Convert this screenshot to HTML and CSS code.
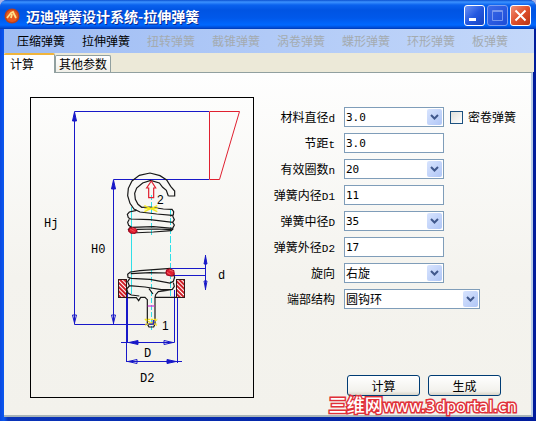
FILE: index.html
```html
<!DOCTYPE html>
<html lang="zh-CN">
<head>
<meta charset="utf-8">
<title>迈迪弹簧设计系统-拉伸弹簧</title>
<link rel="stylesheet" href="styles.css">
</head>
<body>
<div class="window">
  <header class="titlebar">
    <svg class="logo" viewBox="0 0 16 16" aria-hidden="true">
      <circle cx="8" cy="8" r="7.5" fill="#b8401c"/>
      <circle cx="8" cy="8" r="6" fill="#e8581c"/>
      <path d="M3 10 7 5 9 4 12 10M7 10 8 6" fill="none" stroke="#ffe08a" stroke-width="1.8"/>
    </svg>
    <h1 class="title">迈迪弹簧设计系统-拉伸弹簧</h1>
    <div class="controls">
      <button class="control" type="button" aria-label="最小化"><svg viewBox="0 0 19 19"><path d="M4 13.500h7" stroke="#fff" stroke-width="3"/></svg></button>
      <button class="control control-off" type="button" aria-label="最大化" disabled><svg viewBox="0 0 19 19"><path d="M4.500 4.500h10v10h-10zM4.500 5.500h10" fill="none" stroke="#7898ee"/></svg></button>
      <button class="control control-close" type="button" aria-label="关闭"><svg viewBox="0 0 19 19"><path d="m4.500 4.500 10 10m0-10-10 10" stroke="#fff" stroke-width="2"/></svg></button>
    </div>
  </header>
  <nav class="menu">
    <button type="button">压缩弹簧</button>
    <button type="button">拉伸弹簧</button>
    <button type="button" disabled>扭转弹簧</button>
    <button type="button" disabled>截锥弹簧</button>
    <button type="button" disabled>涡卷弹簧</button>
    <button type="button" disabled>蝶形弹簧</button>
    <button type="button" disabled>环形弹簧</button>
    <button type="button" disabled>板弹簧</button>
  </nav>
  <div class="tabs" role="tablist">
    <button class="tab tab-active" type="button" role="tab" aria-selected="true">计算</button>
    <button class="tab" type="button" role="tab" aria-selected="false">其他参数</button>
  </div>
  <main class="panel">
    <svg class="drawing" viewBox="31 98 222 299" role="img" aria-label="拉伸弹簧">
      <defs>
        <pattern id="hatch" width="3" height="3" patternUnits="userSpaceOnUse" patternTransform="rotate(-45)">
          <rect width="3" height="3" fill="#fff"/><path d="M1 0v3" stroke="#d02028" stroke-width="2"/>
        </pattern>
      </defs>
      <g stroke="#30dfe8" fill="none" shape-rendering="crispEdges">
        <path d="M131.500 207v87"/>
        <path d="M151.500 195v42M151.500 270v60" stroke-dasharray="5 2"/>
        <path d="M170.500 209v87" stroke-dasharray="7 2"/>
      </g>
      <g fill="none" stroke="#1818c8">
        <path d="M209 111.500H74.500V324.500H155M209 179.500H113.500V324.500"/>
        <path d="M171 268.500h35M171 275.500h35M205.500 255v35"/>
        <path d="M121 342.500H174.500V290M126.500 362V290M126 361.500H182M177.500 280V363"/>
        <path d="M127 291v52" stroke-width="2"/>
        <path d="M74.500 112l-2 9h4zM113.500 180l-2 9h4zM205.500 256l-1.500 8h3z" fill="#1818c8"/>
        <path d="M74.500 323l-2-8h4zM113.500 323l-2-8h4zM205.500 289l-1.500-8h3z"/>
        <path d="M173 342.500l-9-2v4zM128 361.500l9-2v4z"/>
        <path d="M129 342.500l9-2v4zM176 361.500l-9-2v4z" fill="#1818c8"/>
      </g>
      <path d="M209.500 111.500h30l-20 68h-10z" fill="none" stroke="#e02030"/>
      <rect x="118.500" y="279.500" width="8" height="18" fill="url(#hatch)" stroke="#301818"/>
      <rect x="176.500" y="279.500" width="8" height="18" fill="url(#hatch)" stroke="#301818"/>
      <g transform="translate(110 165) scale(.333333)" fill="none" stroke="#181818" stroke-width="3.6">
        <path d="M175 93h19v-15L182 64 170 45 150 32 120 24 88 31 66 48 55 70 53 92 60 115 72 132 90 141 140 147 188 151"/>
        <path d="M175 93 169 76 158 67 148 54 122 46 98 54 80 69 74 85 76 103 84 118 95 127 120 126 160 132 186 133 191 140 190 150 180 153"/>
        <path d="M80 136 58 141 52 148 55 158 62 162 120 164 188 172 193 164 188 153M58 163 53 172 56 181 65 187 130 185 188 190 193 180 188 172M62 186 55 194 64 204 130 201 184 197 190 191M80 193 140 192 185 194"/>
        <path d="M116 98V69H110L124 48 137 69H131V98z" stroke="#e02030"/>
        <path d="m103 122 39 18m0-18-39 18m0-9h40" stroke="#f4ea20" stroke-width="4"/>
        <path d="M58 190 67 188 78 192 81 199 74 205 62 204 56 198z" fill="#e02030" stroke="#a80820"/>
        <path d="m60 192 14 8m-8-11 11 4" stroke="#ff6868" stroke-width="2"/>
      </g>
      <g transform="translate(110 255) scale(.333333)" fill="none" stroke="#181818" stroke-width="3.6">
        <path d="M182 40 90 47 61 51 53 58 54 67 64 70 120 73 180 84 190 79 194 66 188 57M62 56 120 53 174 54M59 71 53 80 58 92 105 96 154 104 187 103 193 94 190 83M58 93 50 102 54 114 64 120 88 123M187 104 145 110 137 119 135 128V207l-4 9h-14l-5-9V134L105 127H92L86 137 79 128H52M135 127h66M117 101 129 117"/>
        <path d="m170 45 9-3 12 5 2 11-7 5-15-3-3-7z" fill="#e02030" stroke="#a80820"/>
        <path d="m171 52 10 6m-3-13 12 4" stroke="#ff8888" stroke-width="2"/>
        <path d="M113 153h21" stroke="#d030d0"/>
        <path d="m106 195 35 16m0-16-35 16m-2-18h38m-36 14h36" stroke="#f4e020" stroke-dasharray="7 2"/>
        <path d="M115 207h15v-12" stroke="#1818c8"/>
      </g>
      <g class="marks">
        <text x="44" y="227">Hj</text>
        <text x="91" y="253">H0</text>
        <text x="218" y="279">d</text>
        <text x="144" y="357">D</text>
        <text x="140" y="382">D2</text>
        <text class="mark-number" x="157" y="204">2</text>
        <text class="mark-number" x="162" y="330">1</text>
      </g>
    </svg>
    <form class="form">
      <div class="fields">
        <label for="wire">材料直径<span class="latin">d</span></label>
        <div class="row">
          <span class="combo"><select id="wire"><option>3.0</option></select><svg viewBox="0 0 15 16"><path d="m4 6 3.500 3.500L11 6"/></svg></span>
          <label class="check"><input type="checkbox">密卷弹簧</label>
        </div>
        <label for="pitch">节距<span class="latin">t</span></label>
        <input class="text" id="pitch" value="3.0">
        <label for="turns">有效圈数<span class="latin">n</span></label>
        <span class="combo"><select id="turns"><option>20</option></select><svg viewBox="0 0 15 16"><path d="m4 6 3.500 3.500L11 6"/></svg></span>
        <label for="inner">弹簧内径<span class="latin">D1</span></label>
        <input class="text" id="inner" value="11">
        <label for="middle">弹簧中径<span class="latin">D</span></label>
        <span class="combo"><select id="middle"><option>35</option></select><svg viewBox="0 0 15 16"><path d="m4 6 3.500 3.500L11 6"/></svg></span>
        <label for="outer">弹簧外径<span class="latin">D2</span></label>
        <input class="text" id="outer" value="17">
        <label for="turn">旋向</label>
        <span class="combo"><select class="han" id="turn"><option>右旋</option></select><svg viewBox="0 0 15 16"><path d="m4 6 3.500 3.500L11 6"/></svg></span>
        <label for="ends">端部结构</label>
        <span class="combo combo-wide"><select class="han" id="ends"><option>圆钩环</option></select><svg viewBox="0 0 15 16"><path d="m4 6 3.500 3.500L11 6"/></svg></span>
      </div>
      <div class="actions">
        <button type="button">计算</button>
        <button type="button">生成</button>
      </div>
    </form>
  </main>
  <div class="watermark"><span class="watermark-han">三维网</span>www.3dportal.cn</div>
</div>
</body>
</html>
```
FILE: styles.css
```css
* { box-sizing: border-box; }

body {
  margin: 0;
  background: #a9b4e8;
  color: #000;
  font: 12px/16px "Noto Sans CJK SC", sans-serif;
}

button, input, select { font: inherit; color: inherit; margin: 0; }

.window {
  position: relative;
  display: flex;
  flex-direction: column;
  min-height: 100vh;
  padding: 0 4px 4px;
  background: linear-gradient(90deg, #0a48e0 0, #0a58f0 4px, #0a34b8 8px, #001c9c 100%);
  border-radius: 7px 7px 0 0;
}

.titlebar {
  display: flex;
  align-items: center;
  height: 29px;
  margin: 0 -4px;
  padding: 2px 5px 0 4px;
  border-radius: 7px 7px 0 0;
  background: linear-gradient(#0a50d0 0, #3c92ff 2px, #0a62ee 5px, #0054e3 10px, #0058ea 18px, #0068ff 25px, #0048d0 28px, #0038b0 29px);
}

.logo { width: 16px; height: 16px; }

.title {
  flex: 1;
  margin: 0 0 0 6px;
  color: #fff;
  font-size: 14px;
  font-weight: 700;
  line-height: 20px;
  text-shadow: 1px 1px 0 #0a2a90;
  white-space: nowrap;
}

.controls { display: flex; gap: 2px; }

.control {
  width: 21px;
  height: 21px;
  padding: 0;
  border: 1px solid #fff;
  border-radius: 3px;
  background: linear-gradient(135deg, #6c92f4, #2458e0 50%, #1844c0);
}

.control svg { display: block; width: 19px; height: 19px; }
.control-off { border-color: #7c9ef0; background: linear-gradient(135deg, #3c6ae8, #1c4cd8); }
.control-close { background: linear-gradient(135deg, #f09078, #e0502c 50%, #b83414); }

.menu {
  display: flex;
  gap: 17px;
  height: 24px;
  margin-right: -2px;
  padding-left: 13px;
  background: linear-gradient(90deg, #9ebcf4, #c4d8fa);
}

.menu button {
  padding: 0;
  border: 0;
  background: none;
  white-space: nowrap;
}

.menu button:disabled { color: #a4abb0; }

.tabs {
  display: flex;
  align-items: flex-end;
  height: 19px;
  margin-right: -2px;
  background: #ece9d8;
}

.tab {
  height: 17px;
  padding: 0 3px;
  border: 1px solid #91a0a0;
  border-bottom: 0;
  border-radius: 2px 2px 0 0;
  background: linear-gradient(#fff, #f0efe8);
  white-space: nowrap;
}

.tab-active {
  width: 51px;
  height: 20px;
  margin-bottom: -1px;
  padding: 0 20px 0 6px;
  border-top: 2px solid #f0b43c;
  border-left: 0;
  background: #fefefe;
  z-index: 1;
}

.panel {
  display: flex;
  flex: 1;
  align-items: flex-start;
  gap: 19px;
  margin-right: -1px;
  padding: 24px 12px 17px 26px;
  border-top: 1px solid #91a0a0;
  border-right: 2px solid #b8cce8;
  border-bottom: 2px solid #a8b4b8;
  background: linear-gradient(#fefefe, #f4f3ee 60%, #f3f2ec);
}

.drawing {
  flex: none;
  width: 224px;
  height: 301px;
  border: 1px solid #000;
}

.marks { font: 12px "Liberation Mono", monospace; }
.mark-number { font-family: "Liberation Sans", sans-serif; }

.form { flex: 1; padding-top: 10px; }

.fields {
  display: grid;
  grid-template-columns: 62px 1fr;
  grid-auto-rows: 20px;
  gap: 6px 9px;
  align-items: center;
}

.fields > label { text-align: right; white-space: nowrap; }
.latin { font: 11px "Liberation Mono", monospace; }

.row { display: flex; align-items: center; gap: 6px; }

.text, .combo select {
  width: 100px;
  height: 20px;
  padding: 0 1px;
  border: 1px solid #7f9db9;
  border-radius: 0;
  outline: 0;
  background: #fff;
  font: 11px "DejaVu Sans Mono", monospace;
}

.combo { position: relative; width: 100px; height: 20px; }
.combo select { display: block; width: 100%; appearance: none; }
.combo .han { font: 12px/16px "Noto Sans CJK SC", sans-serif; }
.combo-wide { width: 136px; }

.combo svg {
  position: absolute;
  top: 2px;
  right: 2px;
  width: 15px;
  height: 16px;
  border-radius: 2px;
  background: linear-gradient(135deg, #d8e4fe, #b0c6f6);
  pointer-events: none;
}

.combo path { fill: none; stroke: #40588c; stroke-width: 2; }

.check { display: flex; align-items: center; gap: 5px; white-space: nowrap; }

.check input {
  appearance: none;
  width: 13px;
  height: 13px;
  border: 1px solid #1c5180;
  background: linear-gradient(135deg, #e0e0da, #fff);
}

.actions {
  display: flex;
  gap: 8px;
  margin: 66px 0 0 74px;
}

.actions button {
  width: 73px;
  height: 21px;
  padding: 0;
  border: 1px solid #003c74;
  border-radius: 3px;
  background: linear-gradient(#fff, #f2f1ec 80%, #d8d4c8);
}

.watermark {
  position: absolute;
  right: 19px;
  bottom: 5px;
  color: #fff;
  font: 400 16px/18px "DejaVu Sans", sans-serif;
  -webkit-text-stroke: 3px #e03038;
  paint-order: stroke fill;
  white-space: nowrap;
}

.watermark-han { font: 500 18px/18px "Noto Sans CJK SC", sans-serif; }
```
